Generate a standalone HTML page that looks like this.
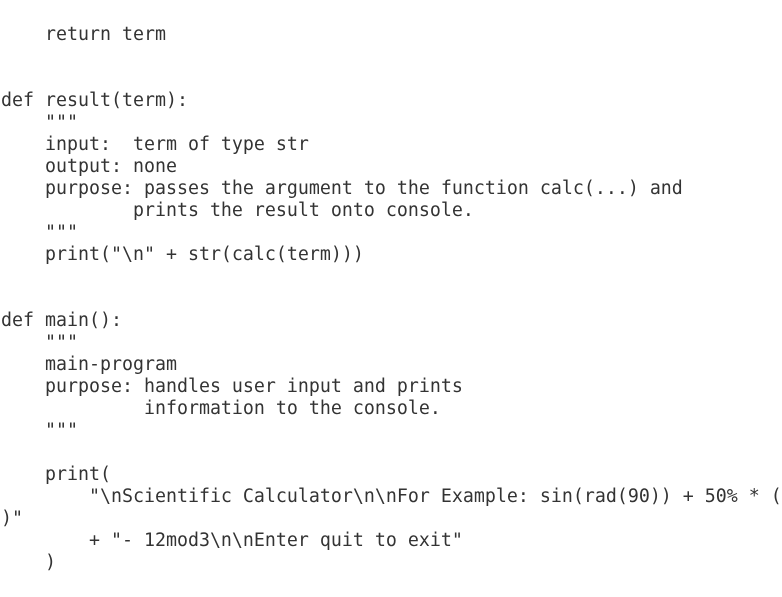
<!DOCTYPE html>
<html><head><meta charset="utf-8"><style>
html,body{margin:0;padding:0;background:#fff;width:782px;height:597px;overflow:hidden}
pre{margin:0;position:absolute;left:1px;top:24px;font-family:"DejaVu Sans Mono","Liberation Mono",monospace;font-size:18.27px;line-height:22px;color:#333;white-space:pre}
</style></head><body>
<pre>    return term


def result(term):
    """
    input:  term of type str
    output: none
    purpose: passes the argument to the function calc(...) and
            prints the result onto console.
    """
    print("\n" + str(calc(term)))


def main():
    """
    main-program
    purpose: handles user input and prints
             information to the console.
    """

    print(
        "\nScientific Calculator\n\nFor Example: sin(rad(90)) + 50% * (
)"
        + "- 12mod3\n\nEnter quit to exit"
    )</pre>
</body></html>
